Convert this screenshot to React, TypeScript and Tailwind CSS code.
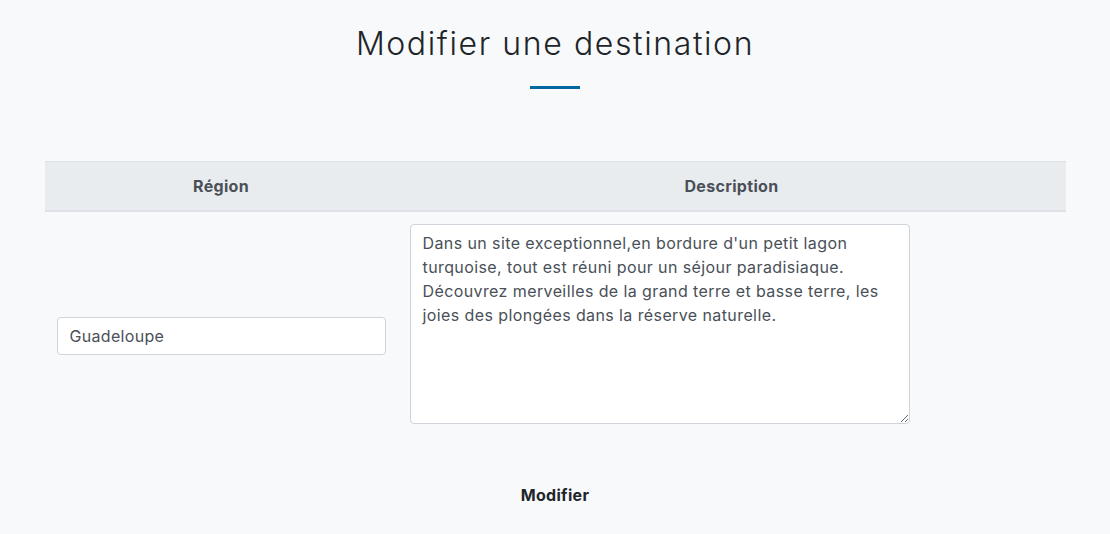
import { useState } from 'react'

const FONT = { fontFamily: 'Inter, "Noto Sans", sans-serif' }

export default function App() {
  const [region, setRegion] = useState('Guadeloupe')
  const [description, setDescription] = useState(
    "Dans un site exceptionnel,en bordure d'un petit lagon turquoise, tout est réuni pour un séjour paradisiaque. Découvrez merveilles de la grand terre et basse terre, les joies des plongées dans la réserve naturelle."
  )

  return (
    <div className="min-h-[534px] w-full bg-[#f8f9fa] text-[#212529]" style={FONT}>
      <div className="flex flex-col items-center pt-[24px]">
        <h1 className="text-[32px] font-light leading-[40px] tracking-[0.05em] text-[#212529]">
          Modifier une destination
        </h1>
        <div className="mt-[22px] h-[3px] w-[50px] bg-[#0067a0]" />
      </div>

      <div className="mx-auto mt-[72px] w-[1021px]">
        <table className="w-full border-collapse">
          <thead>
            <tr className="bg-[#e9ecef] border-t border-[#dee2e6]">
              <th className="w-[353px] h-[49px] border-b-2 border-[#dee2e6] text-center text-[16px] font-bold tracking-[0.02em] text-[#495057]">
                Région
              </th>
              <th className="h-[49px] border-b-2 border-[#dee2e6] text-center text-[16px] font-bold tracking-[0.02em] text-[#495057]">
                Description
              </th>
            </tr>
          </thead>
          <tbody>
            <tr>
              <td className="p-3 pt-[37px] align-middle">
                <input
                  value={region}
                  onChange={(e) => setRegion(e.target.value)}
                  className="block h-[38px] w-full rounded-[4px] border border-[#ced4da] bg-white px-3 text-[16px] tracking-[0.02em] text-[#495057] outline-none"
                  style={FONT}
                />
              </td>
              <td className="p-3 align-middle">
                <textarea
                  value={description}
                  onChange={(e) => setDescription(e.target.value)}
                  className="block h-[200px] w-[500px] resize-y rounded-[4px] border border-[#ced4da] bg-white px-3 py-[6px] text-[16px] leading-[24px] tracking-[0.025em] text-[#495057] outline-none"
                  style={FONT}
                />
              </td>
            </tr>
          </tbody>
        </table>

        <div className="mt-[47px] flex justify-center">
          <button className="text-[16px] font-bold tracking-[0.02em] text-[#212529]" style={FONT}>
            Modifier
          </button>
        </div>
      </div>
    </div>
  )
}
